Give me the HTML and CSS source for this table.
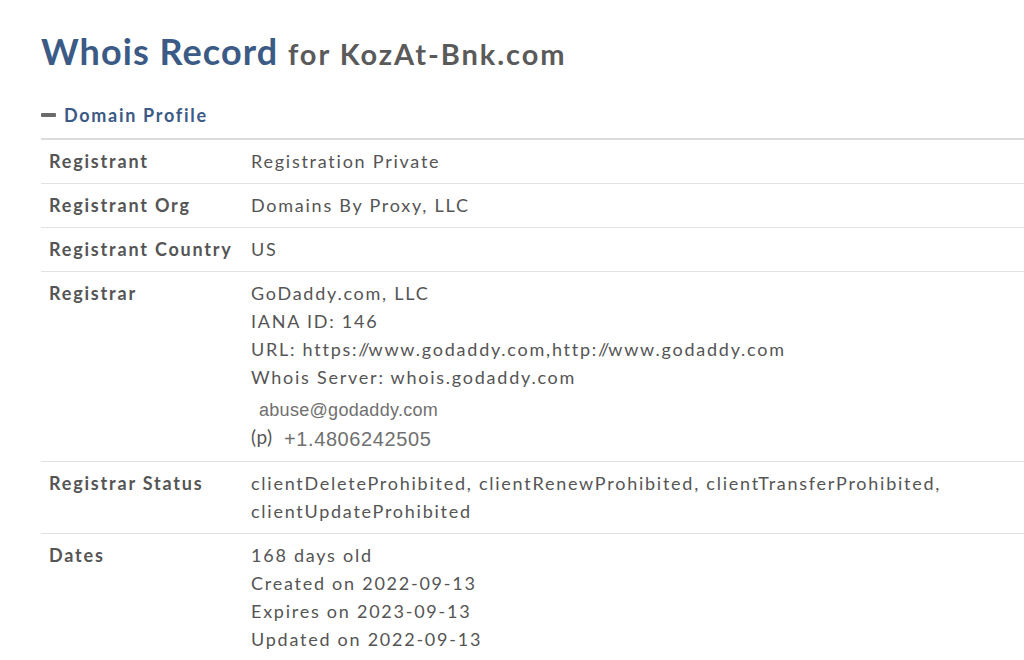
FILE: index.html
```html
<!DOCTYPE html>
<html>
<head>
<meta charset="utf-8">
<link rel="stylesheet" href="styles.css">
</head>
<body>
<div class="page">
  <h1 class="title"><span class="title-main">Whois Record</span> <span class="title-sub">for KozAt-Bnk.com</span></h1>
  <div class="section-head"><span class="minus"></span><span class="section-name">Domain Profile</span></div>
  <div class="table">
    <div class="row">
      <div class="label">Registrant</div>
      <div class="value">Registration Private</div>
    </div>
    <div class="row">
      <div class="label">Registrant Org</div>
      <div class="value">Domains By Proxy, LLC</div>
    </div>
    <div class="row">
      <div class="label">Registrant Country</div>
      <div class="value">US</div>
    </div>
    <div class="row">
      <div class="label">Registrar</div>
      <div class="value">
        <div>GoDaddy.com, LLC</div>
        <div>IANA ID: 146</div>
        <div>URL: https:<span class="slashes">//</span>www.godaddy.com,http:<span class="slashes">//</span>www.godaddy.com</div>
        <div>Whois Server: whois.godaddy.com</div>
        <div class="img-text email">abuse@godaddy.com</div>
        <div class="phone"><span class="phone-tag">(p)</span><span class="img-text phone-num">+1.4806242505</span></div>
      </div>
    </div>
    <div class="row">
      <div class="label">Registrar Status</div>
      <div class="value">clientDeleteProhibited, clientRenewProhibited, clientTransferProhibited, clientUpdateProhibited</div>
    </div>
    <div class="row">
      <div class="label">Dates</div>
      <div class="value">
        <div>168 days old</div>
        <div>Created on 2022-09-13</div>
        <div>Expires on 2023-09-13</div>
        <div>Updated on 2022-09-13</div>
      </div>
    </div>
  </div>
</div>
</body>
</html>
```

FILE: styles.css
```css
html, body {
  margin: 0;
  padding: 0;
  background: #ffffff;
}
body {
  font-family: Lato, "Open Sans", "Liberation Sans", sans-serif;
  color: #555555;
}
.page {
  padding: 28px 0 0 41px;
}
.title {
  margin: 0;
  font-weight: 700;
  line-height: 46px;
  white-space: nowrap;
}
.title-main {
  font-size: 36px;
  color: #3b5a85;
  letter-spacing: 1.05px;
}
.title-sub {
  font-size: 29px;
  color: #5a5a5a;
  letter-spacing: 1.95px;
  margin-left: 2px;
}
.section-head {
  display: flex;
  align-items: center;
  gap: 8px;
  margin-top: 26px;
  height: 24px;
}
.minus {
  width: 15px;
  height: 4px;
  background: #6b6b6b;
  border-radius: 1px;
}
.section-name {
  font-size: 18px;
  font-weight: 700;
  color: #3b5a85;
  letter-spacing: 1.7px;
}
.table {
  margin-top: 11px;
  border-top: 2px solid #dcdcdc;
}
.row {
  display: flex;
  border-bottom: 1px solid #e2e2e2;
  padding: 7px 0 8px 8px;
  font-size: 18px;
  line-height: 28px;
  letter-spacing: 1.75px;
}
.label {
  width: 202px;
  flex: none;
  font-weight: 700;
  color: #555555;
  letter-spacing: 1.8px;
}
.value {
  flex: 1;
  color: #555555;
  padding-right: 40px;
}
.slashes {
  letter-spacing: -1px;
}
.img-text {
  font-family: "Liberation Sans", Arial, sans-serif;
  color: #707070;
}
.email {
  font-size: 18px;
  letter-spacing: 0.3px;
  padding-left: 8px;
  line-height: 30px;
  margin-top: 4px;
}
.phone {
  display: flex;
  align-items: center;
  line-height: 28px;
}
.phone-tag {
  font-size: 19px;
  letter-spacing: 0.5px;
  width: 33px;
  position: relative;
  top: -2px;
}
.phone-num {
  font-size: 20px;
  letter-spacing: 0.6px;
}
```
